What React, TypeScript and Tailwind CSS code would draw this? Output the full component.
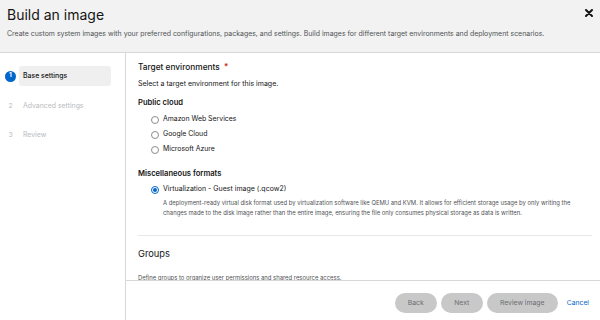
import React from "react";

function Radio({ checked }: { checked?: boolean }) {
  return checked ? (
    <span className="w-[8px] h-[8px] rounded-full border border-[#0066cc] flex items-center justify-center shrink-0">
      <span className="w-[4px] h-[4px] rounded-full bg-[#0066cc]" />
    </span>
  ) : (
    <span className="w-[8px] h-[8px] rounded-full border border-[#8a8d90] shrink-0" />
  );
}

export default function App() {
  return (
    <div
      className="w-[600px] h-[320px] bg-white flex flex-col overflow-hidden text-[#151515]"
      style={{ fontFamily: "Inter, 'Noto Sans', sans-serif" }}
    >
      <div className="h-[53px] bg-[#f2f2f2] border-b border-[#d8d8d8] pl-[7px] pt-[6px] relative shrink-0">
        <div className="text-[14px] leading-[18px] font-normal">Build an image</div>
        <div className="text-[6.95px] leading-[10px] text-[#4f5255] mt-[5px] whitespace-nowrap">
          Create custom system images with your preferred configurations, packages, and settings. Build images for different target environments and deployment scenarios.
        </div>
        <svg className="absolute left-[585px] top-[9px]" width="8" height="8" viewBox="0 0 8 8">
          <path d="M1 1 L7 7 M7 1 L1 7" stroke="#151515" strokeWidth="2" strokeLinecap="round" />
        </svg>
      </div>
      <div className="flex flex-1 min-h-0">
        <div className="w-[126px] border-r border-[#d8d8d8] shrink-0 pt-[13px] pl-[5px]">
          <div className="flex items-center h-[20px]">
            <span className="w-[11px] h-[11px] rounded-full bg-[#0066cc] text-white text-[6.5px] font-bold flex items-center justify-center shrink-0">1</span>
            <div className="ml-[3px] w-[92px] h-[20px] bg-[#efefef] rounded-[3px] flex items-center pl-[4px] text-[6.9px] font-medium">
              Base settings
            </div>
          </div>
          <div className="flex items-center h-[20px] mt-[10px] text-[6.9px] text-[#b8bbbe]">
            <span className="w-[11px] text-center text-[6.8px]">2</span>
            <span className="ml-[7px]">Advanced settings</span>
          </div>
          <div className="flex items-center h-[20px] mt-[9px] text-[6.9px] text-[#b8bbbe]">
            <span className="w-[11px] text-center text-[6.8px]">3</span>
            <span className="ml-[7px]">Review</span>
          </div>
        </div>
        <div className="flex-1 flex flex-col min-w-0">
          <div className="flex-1 min-h-0 overflow-hidden pl-[12px] pr-[8px]">
            <div className="pt-[8px] text-[8.3px] font-medium leading-[12px]">
              Target environments <span className="text-[#c9190b] ml-[2px]">*</span>
            </div>
            <div className="mt-[5px] text-[7px] leading-[12px]">Select a target environment for this image.</div>
            <div className="mt-[7px] text-[7.6px] font-semibold leading-[12px]">Public cloud</div>
            <div className="mt-[3px] pl-[13px] flex flex-col">
              {["Amazon Web Services", "Google Cloud", "Microsoft Azure"].map((t) => (
                <div key={t} className="flex items-center h-[15px] text-[6.9px]">
                  <Radio />
                  <span className="ml-[4px]">{t}</span>
                </div>
              ))}
            </div>
            <div className="mt-[11px] text-[7.6px] font-semibold leading-[12px]">Miscellaneous formats</div>
            <div className="mt-[2px] pl-[13px] flex items-center h-[15px] text-[7px]">
              <Radio checked />
              <span className="ml-[4px]">Virtualization - Guest image (.qcow2)</span>
            </div>
            <div className="pl-[25px] mt-[1px] text-[5.9px] leading-[10px] text-[#4f5255]">
              A deployment-ready virtual disk format used by virtualization software like QEMU and KVM. It allows for efficient storage usage by only writing the changes made to the disk image rather than the entire image, ensuring the file only consumes physical storage as data is written.
            </div>
            <div className="mt-[17px] border-t border-[#e8e8e8]" />
            <div className="mt-[11px] text-[9.3px] leading-[14px]">Groups</div>
            <div className="mt-[12px] text-[5.9px] leading-[10px] text-[#4f5255] whitespace-nowrap">
              Define groups to organize user permissions and shared resource access.
            </div>
          </div>
          <div className="h-[40px] border-t border-[#d8d8d8] shrink-0 flex items-start pt-[12px] justify-end pr-[11px] gap-[4px]">
            <button className="h-[20px] w-[42px] rounded-full bg-[#c8c8c8] text-[6.8px] text-[#6a6e73]">Back</button>
            <button className="h-[20px] w-[42px] rounded-full bg-[#c8c8c8] text-[6.8px] text-[#6a6e73]">Next</button>
            <button className="h-[20px] w-[71px] rounded-full bg-[#c8c8c8] text-[6.8px] text-[#6a6e73]">Review image</button>
            <button className="ml-[5px] h-[20px] text-[6.8px] text-[#0066cc]">Cancel</button>
          </div>
        </div>
      </div>
    </div>
  );
}
